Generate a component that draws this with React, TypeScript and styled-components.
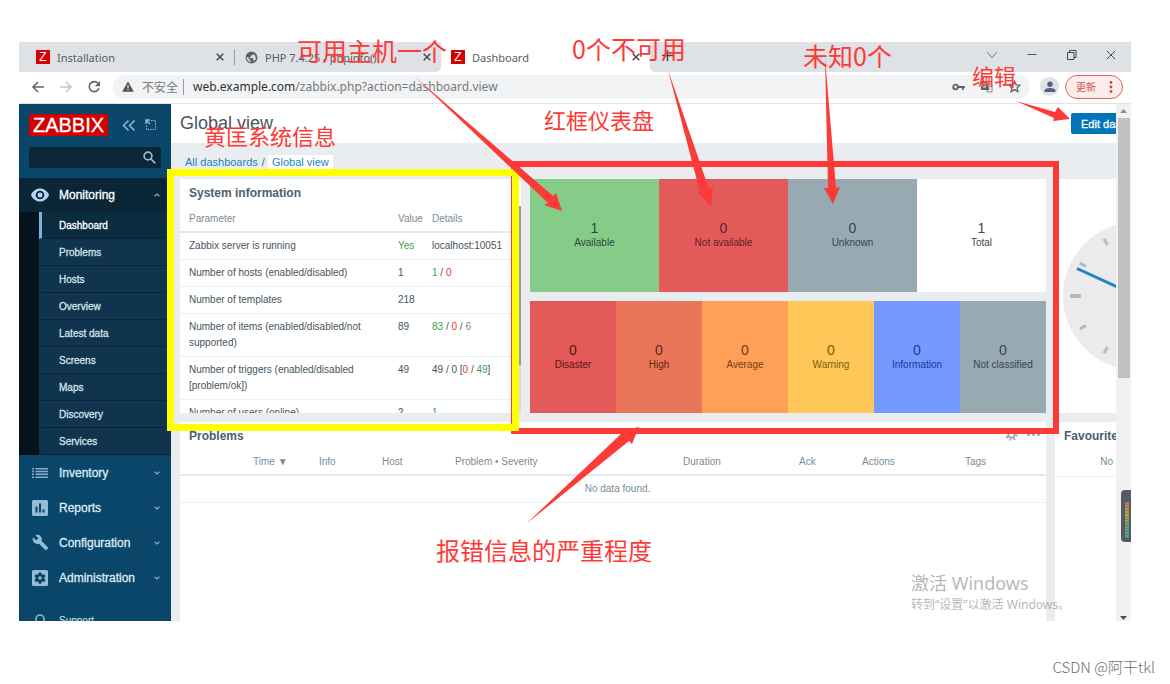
import React from "react";
import styled, { createGlobalStyle, css } from "styled-components";

const RED = "#fd3a37";

const GlobalStyle = createGlobalStyle`
  *, *::before, *::after { box-sizing: border-box; }
  body { margin: 0; background: #fff; overflow: hidden; }
  h1, h2, p, ul { margin: 0; padding: 0; }
  ul { list-style: none; }
  a { color: inherit; text-decoration: none; }
  button { border: 0; padding: 0; background: none; color: inherit; font: inherit; }
`;

const Page = styled.div`
  position: relative;
  display: flex;
  flex-direction: column;
  height: 100vh;
  overflow: hidden;
  font-family: "Liberation Sans", Arial, "Noto Sans CJK SC", sans-serif;
`;

const Frame = styled.div`
  flex: 1;
  min-height: 0;
  margin: 42px 39px 0 19px;
  display: flex;
  flex-direction: column;
  overflow: hidden;
`;

/* ---------- browser chrome ---------- */

const TabStrip = styled.div`
  display: flex;
  align-items: stretch;
  height: 30px;
  flex-shrink: 0;
  background: #dee1e6;
  color: #5a5d61;
  font: 11px "Noto Sans", "Noto Sans CJK SC", sans-serif;
`;

const TabItem = styled.div<{ $active?: boolean; $width: number }>`
  display: flex;
  align-items: center;
  gap: 7px;
  width: ${(p) => p.$width}px;
  padding: 0 10px 0 10px;
  white-space: nowrap;
  ${(p) =>
    p.$active &&
    css`
      background: #fff;
    `}
`;

const TabTitle = styled.span`
  flex: 1;
`;

const Divider = styled.span`
  width: 1px;
  height: 16px;
  align-self: center;
  background: #9a9da2;
`;

const Favicon = styled.span`
  width: 14px;
  height: 14px;
  background: #d40000;
  color: #fff;
  text-align: center;
  font: 12px/14px "Liberation Sans", Arial, sans-serif;
`;

const IconButton = styled.button`
  display: flex;
  align-items: center;
  justify-content: center;
`;

const StripEnd = styled.div`
  flex: 1;
  display: flex;
  justify-content: space-between;
  padding: 0 15px 4px 12px;
  border-bottom-left-radius: 5px;
  background: #dee1e6;
`;

const StripEndWrap = styled.div`
  flex: 1;
  display: flex;
  background: #fff;
`;

const LeftTabs = styled.div`
  display: flex;
  width: 422px;
  padding-left: 7px;
  border-bottom-right-radius: 5px;
  background: #dee1e6;
`;

const LeftTabsWrap = styled.div`
  display: flex;
  background: #fff;
`;

const WindowControls = styled.div`
  display: flex;
  gap: 28px;
`;

const Toolbar = styled.div`
  display: flex;
  align-items: center;
  height: 32px;
  flex-shrink: 0;
  padding: 0 8px 2px 12px;
  border-bottom: 1px solid #e3e3e3;
  background: #fff;
`;

const NavButtons = styled.div`
  display: flex;
  gap: 14px;
  width: 82px;
`;

const AddressBar = styled.div`
  flex: 1;
  display: flex;
  align-items: center;
  height: 24px;
  padding: 0 9px 0 9px;
  border-radius: 12px;
  background: #f1f3f4;
  color: #77797c;
  white-space: nowrap;
  font: 12px "Noto Sans", "Noto Sans CJK SC", sans-serif;
`;

const Insecure = styled.span`
  display: flex;
  align-items: center;
  gap: 8px;
  margin-right: 5px;
`;

const Url = styled.span`
  flex: 1;
  margin-left: 9px;
`;

const UrlHost = styled.span`
  color: #303134;
`;

const AddressIcons = styled.span`
  display: flex;
  align-items: center;
  gap: 15px;
`;

const Avatar = styled.span`
  display: flex;
  align-items: center;
  justify-content: center;
  width: 19px;
  height: 19px;
  margin: 0 6px 0 10px;
  border-radius: 50%;
  background: #dee1e6;
`;

const UpdateButton = styled.button`
  display: flex;
  align-items: center;
  justify-content: space-between;
  width: 58px;
  height: 24px;
  padding: 0 9px 0 10px;
  border: 1px solid #d9635f;
  border-radius: 12px;
  background: #fcecea;
  color: #d0544f;
  font: 10px "Noto Sans CJK SC", sans-serif;
`;

/* ---------- page body ---------- */

const Body = styled.div`
  flex: 1;
  min-height: 0;
  display: flex;
`;

const Sidebar = styled.aside`
  width: 152px;
  flex-shrink: 0;
  overflow: hidden;
  background: #0a466a;
  color: #d3e5f0;
`;

const SidebarTop = styled.div`
  display: flex;
  flex-direction: column;
  gap: 11px;
  height: 74px;
  padding: 10px 10px 0;
`;

const LogoRow = styled.div`
  display: flex;
  align-items: center;
  color: #8fb9d3;
`;

const Logo = styled.a`
  width: 79px;
  height: 22px;
  margin-right: 14px;
  background: #d40000;
  color: #fff;
  text-align: center;
  font-size: 20px;
  line-height: 22px;
  -webkit-text-stroke: 0.3px;
`;

const Collapse = styled(IconButton)`
  margin-right: 9px;
`;

const SearchBox = styled.label`
  display: flex;
  align-items: center;
  height: 21px;
  padding-right: 5px;
  border-radius: 2px;
  background: #0a2637;
  color: #9cbdd1;
`;

const SearchInput = styled.input`
  flex: 1;
  min-width: 0;
  height: 21px;
  border: 0;
  outline: 0;
  background: transparent;
  color: #fff;
  font: 10px "Liberation Sans", Arial, sans-serif;
`;

const MenuLink = styled.a<{ $open?: boolean; $small?: boolean }>`
  display: flex;
  align-items: center;
  height: ${(p) => (p.$open ? 34 : 35)}px;
  padding: 0 11px 0 12px;
  background: ${(p) => (p.$open ? "#0a2636" : "transparent")};
  color: ${(p) => (p.$open ? "#fff" : "#dcebf4")};
  font-size: ${(p) => (p.$small ? 10 : 12)}px;
  margin-top: ${(p) => (p.$small ? 8 : 0)}px;
  -webkit-text-stroke: ${(p) => (p.$small ? 0 : "0.3px")};
`;

const MenuIcon = styled.span`
  display: flex;
  align-items: center;
  justify-content: center;
  width: 18px;
  margin-right: 10px;
  color: #94bcd6;
`;

const MenuText = styled.span`
  flex: 1;
`;

const SubMenu = styled.ul`
  padding-left: 20px;
  background: #04131c;
`;

const SubLink = styled.a<{ $active?: boolean }>`
  display: flex;
  align-items: center;
  height: 27px;
  padding-left: 17px;
  border-left: 3px solid ${(p) => (p.$active ? "#78b7e2" : "#10344d")};
  border-bottom: 1px solid #092536;
  background: ${(p) => (p.$active ? "#0b2b3f" : "#10344d")};
  color: ${(p) => (p.$active ? "#fff" : "#d3e1ea")};
  font-size: 10px;
  -webkit-text-stroke: 0.3px;
`;

const Viewport = styled.main`
  flex: 1;
  min-width: 0;
  overflow: hidden;
  background: #e9edf0;
`;

/* The dashboard is wider than the window, so its right side is cut off. */
const Dashboard = styled.div`
  display: flex;
  flex-direction: column;
  width: calc(100% + 103px);
  height: 100%;
  color: #46545d;
  font-size: 10px;
`;

const Header = styled.header`
  display: flex;
  align-items: center;
  justify-content: space-between;
  height: 39px;
  flex-shrink: 0;
  padding-left: 9px;
  background: #fff;
`;

const Title = styled.h1`
  font-size: 18px;
  font-weight: 400;
  color: #4a555d;
`;

const HeaderActions = styled.div`
  width: 148px;
`;

const EditButton = styled.button`
  height: 21px;
  padding: 0 10px;
  border-radius: 2px;
  background: #0275b8;
  color: #fff;
  font-size: 11px;
  -webkit-text-stroke: 0.3px;
`;

const Breadcrumb = styled.nav`
  display: flex;
  align-items: center;
  height: 36px;
  flex-shrink: 0;
  padding: 2px 0 0 14px;
  color: #56646e;
  font-size: 11px;
`;

const Crumb = styled.a<{ $selected?: boolean }>`
  padding: 0 4px 0 ${(p) => (p.$selected ? 4 : 0)}px;
  background: ${(p) => (p.$selected ? "#fff" : "transparent")};
  color: #2384bd;
  line-height: 14px;
`;

const TopGrid = styled.div`
  display: grid;
  grid-template-columns: minmax(0, 341fr) minmax(0, 516fr) 164px;
  gap: 9px;
  height: 234px;
  flex-shrink: 0;
  margin-left: 9px;
`;

const BottomGrid = styled.div`
  flex: 1;
  display: grid;
  grid-template-columns: minmax(0, 1fr) 164px;
  gap: 9px;
  margin: 9px 0 0 9px;
`;

const Widget = styled.section`
  background: #fff;
  overflow: hidden;
`;

const WidgetTitle = styled.h2`
  font-size: 12px;
  line-height: 28px;
  padding: 0 9px;
  color: #4a6170;
`;

const WidgetHead = styled.div`
  display: flex;
  align-items: center;
  justify-content: space-between;
  color: #9aa8b2;
`;

const WidgetTools = styled.span`
  display: flex;
  align-items: center;
  gap: 9px;
  padding: 0 6px 4px 0;
`;

const InfoWidget = styled(Widget)`
  display: flex;
`;

const InfoMain = styled.div`
  flex: 1;
  overflow: hidden;
`;

const InfoScroll = styled.div`
  width: 2px;
  padding-top: 27px;
  background: linear-gradient(#fff 27px, #d9dde0 27px);
`;

const InfoThumb = styled.div`
  height: 159px;
  background: #969c9f;
`;

const Table = styled.table`
  width: 100%;
  table-layout: fixed;
  border-collapse: separate;
  border-spacing: 0;
`;

const Th = styled.th`
  height: 26px;
  padding: 0 0 1px 9px;
  border-bottom: 2px solid #e5e9ec;
  text-align: left;
  font-weight: 400;
  color: #7b8b97;
  white-space: nowrap;
`;

const Td = styled.td`
  padding: 5px 0 5px 9px;
  border-bottom: 1px solid #eef0f2;
  line-height: 16px;
  vertical-align: top;
  white-space: pre-wrap;
`;

const EmptyCell = styled(Td)`
  text-align: center;
  color: #768d99;
`;

const Mark = styled.span<{ $tone?: string }>`
  color: ${(p) =>
    p.$tone === "green" ? "#429e47" : p.$tone === "red" ? "#e33734" : p.$tone === "grey" ? "#768d99" : "inherit"};
`;

const Stats = styled.div`
  display: flex;
  flex-direction: column;
  gap: 9px;
`;

const StatRow = styled.div`
  flex: 1;
  display: flex;
`;

const Stat = styled.div<{ $bg: string; $color: string }>`
  flex: 1;
  min-width: 0;
  display: flex;
  flex-direction: column;
  align-items: center;
  justify-content: center;
  background: ${(p) => p.$bg};
  color: ${(p) => p.$color};
  line-height: 14px;
`;

const StatNumber = styled.span`
  font-size: 14px;
  line-height: 16px;
`;

const ClockWidget = styled(Widget)`
  display: flex;
  align-items: center;
  justify-content: center;
`;

const Favourites = styled.p`
  height: 27px;
  padding-bottom: 3px;
  border-bottom: 1px solid #eef0f2;
  text-align: center;
  line-height: 24px;
  color: #768d99;
`;

const Scrollbar = styled.div`
  display: flex;
  flex-direction: column;
  align-items: center;
  width: 15px;
  flex-shrink: 0;
  padding: 5px 0 1px;
  background: #f1f1f1;
`;

const Thumb = styled.div`
  width: 12px;
  height: 260px;
  margin: 5px 0 auto;
  background: #c1c1c1;
`;

const Footer = styled.footer`
  display: flex;
  align-items: flex-end;
  justify-content: flex-end;
  height: 63px;
  flex-shrink: 0;
  padding: 0 15px 7px 0;
  color: #6f6f6f;
  font: 15px/20px "Noto Sans CJK SC", sans-serif;
  font-weight: 300;
`;

/* ---------- marks lying over the page ---------- */

const Overlay = styled.div`
  position: absolute;
  inset: 0;
  pointer-events: none;
`;

const Box = styled.div<{ $x: number; $y: number; $w: number; $h: number; $color: string }>`
  position: absolute;
  left: ${(p) => p.$x}px;
  top: ${(p) => p.$y}px;
  width: ${(p) => p.$w}px;
  height: ${(p) => p.$h}px;
  border: ${(p) => (p.$color === RED ? 6 : 7)}px solid ${(p) => p.$color};
`;

const Arrows = styled.svg`
  position: absolute;
  left: 0;
  top: 0;
`;

const Note = styled.span<{ $x: number; $y: number; $size: number }>`
  position: absolute;
  left: ${(p) => p.$x}px;
  top: ${(p) => p.$y}px;
  color: ${RED};
  font: ${(p) => p.$size}px/30px "Noto Sans CJK SC", sans-serif;
  white-space: nowrap;
`;

const Activation = styled.div`
  position: absolute;
  left: 911px;
  top: 571px;
  color: rgba(110, 110, 110, 0.5);
  white-space: nowrap;
  font: 12px/17px "Noto Sans", "Noto Sans CJK SC", sans-serif;
`;

const ActivationTitle = styled.p`
  font-size: 18px;
  line-height: 25px;
`;

const Meter = styled.div`
  position: absolute;
  right: 39px;
  top: 490px;
  width: 10px;
  height: 52px;
  padding: 12px 2px 4px 4px;
  border-radius: 4px 0 0 4px;
  background: #565a66;
`;

const MeterBar = styled.div`
  height: 36px;
  background: repeating-linear-gradient(transparent 0 2px, rgba(86, 90, 102, 0.4) 2px 3px),
    linear-gradient(#c9734c, #b9a545 35%, #6fa758 60%, #45a394);
`;

/* ---------- drawings ---------- */

const Cross = ({ size = 8, width = 1.5 }: { size?: number; width?: number }) => (
  <svg width={size} height={size} viewBox="0 0 8 8" stroke="#45484c" strokeWidth={width} fill="none">
    <path d="M.7.7 7.3 7.3M7.3.7.7 7.3" />
  </svg>
);

const Chevron = ({ up }: { up?: boolean }) => (
  <svg width="6" height="4" viewBox="0 0 6 4" fill="none" stroke="#86adc6" strokeWidth="1.2">
    <path d={up ? "M.6 3.2 3 1l2.4 2.2" : "M.6.8 3 3 5.4.8"} />
  </svg>
);

const Globe = () => (
  <svg width="13" height="13" viewBox="0 0 24 24">
    <path
      fill="#5f6368"
      d="M12 1a11 11 0 1 0 0 22 11 11 0 0 0 0-22zm-1 19.900A9 9 0 0 1 3.200 10.200L8.500 15.500v1c0 1.100.9 2 2 2zm7.200-2.700A2 2 0 0 0 16.300 17h-1v-3c0-.6-.5-1-1-1h-6v-2h2c.6 0 1-.5 1-1V8h2a2 2 0 0 0 2-2v-.4a9 9 0 0 1 2.900 12.600z"
    />
  </svg>
);

const Clock = () => (
  <svg width="148" height="148" viewBox="-74 -74 148 148">
    <circle r="74" fill="#ebebeb" />
    {Array.from({ length: 12 }, (_, i) => (
      <path
        key={i}
        d={i % 3 === 0 ? "M0-67V-56" : "M0-66V-59"}
        stroke="#aebcc4"
        strokeWidth={i % 3 === 0 ? 4 : 3}
        transform={`rotate(${i * 30})`}
      />
    ))}
    <path d="M-60-27.500 0 0" stroke="#1a86c3" strokeWidth="3" />
  </svg>
);

const icons: Record<string, React.ReactNode> = {
  eye: (
    <svg width="18" height="14" viewBox="0 0 18 14">
      <path fill="#b3d6ee" d="M9 .5C5 .5 1.600 3 0 7c1.600 4 5 6.500 9 6.500S16.400 11 18 7C16.400 3 13 .5 9 .5z" />
      <circle cx="9" cy="7" r="4.300" fill="#0a2636" />
      <circle cx="9" cy="7" r="2.500" fill="#b3d6ee" />
    </svg>
  ),
  list: (
    <svg width="16" height="10" viewBox="0 0 16 10" fill="#86aecb">
      {[0, 2.800, 5.600, 8.400].map((y) => (
        <path key={y} d={`M0 ${y}h2v1.500h-2zM3.500 ${y}h12.500v1.500h-12.500z`} />
      ))}
    </svg>
  ),
  chart: (
    <svg width="16" height="16" viewBox="0 0 16 16">
      <rect width="16" height="16" rx="1.500" fill="#94bcd6" />
      <path d="M3.500 6.500h2v6h-2zM7 3.500h2v9H7zM10.500 9.500h2v3h-2z" fill="#0a466a" />
    </svg>
  ),
  wrench: (
    <svg width="17" height="17" viewBox="0 0 24 24" fill="#94bcd6">
      <path d="M22.700 19l-9.100-9.100c.9-2.300.4-5-1.500-6.900-2-2-5-2.400-7.400-1.300L9 6 6 9 1.600 4.700C.4 7.100.9 10.100 2.900 12.100c1.900 1.900 4.600 2.400 6.900 1.500l9.100 9.100c.4.4 1 .4 1.400 0l2.300-2.300c.5-.4.5-1.100.1-1.400z" />
    </svg>
  ),
  gear: (
    <svg width="16" height="16" viewBox="0 0 16 16">
      <rect width="16" height="16" rx="1.500" fill="#94bcd6" />
      <path
        d="M6.800 2.500h2.400l.4 1.600 1.200.7 1.600-.5 1.200 2.100-1.200 1.100v1.200l1.200 1.100-1.200 2.100-1.600-.5-1.200.7-.4 1.600H6.800l-.4-1.600-1.200-.7-1.600.5-1.200-2.100 1.200-1.100V7.500L2.400 6.400l1.200-2.100 1.600.5 1.200-.7z"
        fill="#0a466a"
      />
      <circle cx="8" cy="8" r="1.700" fill="#94bcd6" />
    </svg>
  ),
  support: (
    <svg width="12" height="14" viewBox="0 0 12 14" fill="none" stroke="#94bcd6" strokeWidth="1.500">
      <path d="M2 8V5a4 4 0 0 1 8 0v3M2 7v3M10 7v3c0 2-1 3-3 3" />
    </svg>
  ),
};

/* ---------- data ---------- */

const submenu = ["Dashboard", "Problems", "Hosts", "Overview", "Latest data", "Screens", "Maps", "Discovery", "Services"];

const sections = [
  { icon: "list", label: "Inventory" },
  { icon: "chart", label: "Reports" },
  { icon: "wrench", label: "Configuration" },
  { icon: "gear", label: "Administration" },
];

type Piece = [string, string?];
const info: { name: string; value: Piece; details: Piece[] }[] = [
  { name: "Zabbix server is running", value: ["Yes", "green"], details: [["localhost:10051"]] },
  { name: "Number of hosts (enabled/disabled)", value: ["1"], details: [["1", "green"], [" / "], ["0", "red"]] },
  { name: "Number of templates", value: ["218"], details: [] },
  {
    name: "Number of items (enabled/disabled/not supported)",
    value: ["89"],
    details: [["83", "green"], [" / "], ["0", "red"], [" / "], ["6", "grey"]],
  },
  {
    name: "Number of triggers (enabled/disabled [problem/ok])",
    value: ["49"],
    details: [["49 / 0 ["], ["0", "red"], [" / "], ["49", "green"], ["]"]],
  },
  { name: "Number of users (online)", value: ["2"], details: [["1", "green"]] },
];

const hosts = [
  { n: 1, label: "Available", bg: "#86cc89", color: "#2b4a34" },
  { n: 0, label: "Not available", bg: "#e45959", color: "#5c2430" },
  { n: 0, label: "Unknown", bg: "#97a9b1", color: "#38464e" },
  { n: 1, label: "Total", bg: "#ffffff", color: "#3c4b54" },
];

const severities = [
  { n: 0, label: "Disaster", bg: "#e45959", color: "#5c1414" },
  { n: 0, label: "High", bg: "#e97659", color: "#662211" },
  { n: 0, label: "Average", bg: "#ffa059", color: "#7a3c0c" },
  { n: 0, label: "Warning", bg: "#ffc859", color: "#7d5a10" },
  { n: 0, label: "Information", bg: "#7499ff", color: "#173a9c" },
  { n: 0, label: "Not classified", bg: "#97a9b1", color: "#38464e" },
];

const problemColumns: [string, number | undefined][] = [
  ["", 64],
  ["Time", 66],
  ["Info", 63],
  ["Host", 73],
  ["Problem • Severity", 228],
  ["Duration", 116],
  ["Ack", 63],
  ["Actions", 103],
  ["Tags", undefined],
];

const notes = [
  { text: "可用主机一个", x: 297, y: 35, size: 25 },
  { text: "0个不可用", x: 572, y: 33, size: 25 },
  { text: "未知0个", x: 803, y: 40, size: 25 },
  { text: "编辑", x: 972, y: 60, size: 22 },
  { text: "红框仪表盘", x: 544, y: 104, size: 22 },
  { text: "黄匡系统信息", x: 204, y: 120, size: 22 },
  { text: "报错信息的严重程度", x: 436, y: 535, size: 24 },
];

const arrows = [
  "415,77 553,196 556,193 562,211 544,205 548,203",
  "668,70 709,189 713,188 711,207 698,192 700,192",
  "825,58 836,188 840,187 833,204 824,188 828,188",
  "1016,101 1055,112 1058,107 1070,119 1053,121 1054,118",
  "526,524 622,433 620,431 639,427 632,444 629,441",
];

/* ---------- parts ---------- */

const StatGroup = ({ items }: { items: typeof hosts }) => (
  <StatRow>
    {items.map((s) => (
      <Stat key={s.label} $bg={s.bg} $color={s.color}>
        <StatNumber>{s.n}</StatNumber>
        {s.label}
      </Stat>
    ))}
  </StatRow>
);

const Browser = () => (
  <>
    <TabStrip>
      <LeftTabsWrap>
        <LeftTabs>
          <TabItem $width={208}>
            <Favicon>Z</Favicon>
            <TabTitle>Installation</TabTitle>
            <IconButton aria-label="Close tab"><Cross /></IconButton>
          </TabItem>
          <Divider />
          <TabItem $width={206}>
            <Globe />
            <TabTitle>PHP 7.4.25 - phpinfo()</TabTitle>
            <IconButton aria-label="Close tab"><Cross /></IconButton>
          </TabItem>
        </LeftTabs>
      </LeftTabsWrap>
      <TabItem $active $width={209}>
        <Favicon>Z</Favicon>
        <TabTitle>Dashboard</TabTitle>
        <IconButton aria-label="Close tab"><Cross /></IconButton>
      </TabItem>
      <StripEndWrap>
        <StripEnd>
          <IconButton aria-label="New tab">
            <svg width="11" height="11" viewBox="0 0 11 11" stroke="#45484c" strokeWidth="1.500">
              <path d="M5.500 0v11M0 5.500h11" />
            </svg>
          </IconButton>
          <WindowControls>
            <IconButton aria-label="Tab search">
              <svg width="12" height="10" viewBox="0 0 12 10" fill="none" stroke="#777" strokeWidth="1">
                <path d="M1.500 2.500 6 7.500l4.500-5" />
              </svg>
            </IconButton>
            <IconButton aria-label="Minimize">
              <svg width="12" height="10" viewBox="0 0 12 10" stroke="#555"><path d="M1.500 4.500h9" /></svg>
            </IconButton>
            <IconButton aria-label="Restore">
              <svg width="12" height="10" viewBox="0 0 12 10" fill="none" stroke="#444">
                <path d="M1.500 2.500h6.500v7H1.500zM3.500 2.500V.5h6.500v7H8" />
              </svg>
            </IconButton>
            <IconButton aria-label="Close"><Cross size={10} width={0.8} /></IconButton>
          </WindowControls>
        </StripEnd>
      </StripEndWrap>
    </TabStrip>
    <Toolbar>
      <NavButtons>
        <IconButton aria-label="Back">
          <svg width="14" height="14" viewBox="0 0 14 14" fill="none" stroke="#5f6368" strokeWidth="1.500">
            <path d="M13 7H2M7 2 2 7l5 5" />
          </svg>
        </IconButton>
        <IconButton aria-label="Forward">
          <svg width="14" height="14" viewBox="0 0 14 14" fill="none" stroke="#c3c5c8" strokeWidth="1.500">
            <path d="M1 7h11M7 2l5 5-5 5" />
          </svg>
        </IconButton>
        <IconButton aria-label="Reload">
          <svg width="14" height="14" viewBox="0 0 14 14">
            <path d="M11 3.300A5 5 0 1 0 12 8.300" fill="none" stroke="#5f6368" strokeWidth="1.600" />
            <path d="M13 1v5.300H7.700z" fill="#5f6368" />
          </svg>
        </IconButton>
      </NavButtons>
      <AddressBar>
        <Insecure>
          <svg width="12" height="11" viewBox="0 0 12 11">
            <path d="M6 .5 11.800 10.700H.2z" fill="#4d5054" />
            <path d="M5.400 4h1.200v3.200H5.400zM5.400 8h1.200v1.300H5.400z" fill="#f1f3f4" />
          </svg>
          不安全
        </Insecure>
        <Divider />
        <Url>
          <UrlHost>web.example.com</UrlHost>/zabbix.php?action=dashboard.view
        </Url>
        <AddressIcons>
          <svg width="13" height="8" viewBox="0 0 13 8" fill="none" stroke="#5f6368" strokeWidth="1.800">
            <circle cx="3.500" cy="4" r="2.300" />
            <path d="M6 4h6.800M10.800 4v3" />
          </svg>
          <svg width="13" height="13" viewBox="0 0 13 13">
            <path d="M6 4h6v8H7z" fill="#f1f3f4" stroke="#85888c" />
            <path d="M1 1h6l2.500 9H1z" fill="#5f6368" />
            <path d="M5.900 4.400A2 2 0 1 0 6 6H4.300" fill="none" stroke="#f1f3f4" />
          </svg>
          <svg width="13" height="13" viewBox="0 0 13 13" fill="none" stroke="#5f6368" strokeWidth="1.300">
            <path d="m6.500 1.300 1.600 3.500 3.800.4-2.800 2.600.8 3.800-3.400-2-3.400 2 .8-3.800L1.100 5.200l3.800-.4z" />
          </svg>
        </AddressIcons>
      </AddressBar>
      <Avatar>
        <svg width="12" height="12" viewBox="0 0 12 12" fill="#56607c">
          <circle cx="6" cy="3.200" r="2.700" />
          <path d="M.6 11V9.300C.6 7.600 4 6.900 6 6.900s5.400.7 5.400 2.400V11z" />
        </svg>
      </Avatar>
      <UpdateButton>
        更新
        <svg width="4" height="12" viewBox="0 0 4 12" fill="#d0443e">
          <circle cx="2" cy="1.500" r="1.400" /><circle cx="2" cy="6" r="1.400" /><circle cx="2" cy="10.500" r="1.400" />
        </svg>
      </UpdateButton>
    </Toolbar>
  </>
);

const SideNav = () => (
  <Sidebar>
    <SidebarTop>
      <LogoRow>
        <Logo href="#">ZABBIX</Logo>
        <Collapse aria-label="Collapse sidebar">
          <svg width="14" height="11" viewBox="0 0 14 11" fill="none" stroke="currentColor" strokeWidth="1.500">
            <path d="M6.500.5 1.500 5.500l5 5M12.500.5l-5 5 5 5" />
          </svg>
        </Collapse>
        <IconButton aria-label="Hide sidebar">
          <svg width="12" height="12" viewBox="0 0 12 12" fill="none" stroke="currentColor">
            <path d="M1 5V1h4M1.500 1.500 5 5" strokeWidth="1.500" />
            <path d="M6 1.500h4.500v9h-9V6" strokeDasharray="1.500 1" />
          </svg>
        </IconButton>
      </LogoRow>
      <SearchBox>
        <SearchInput aria-label="Search" />
        <svg width="13" height="13" viewBox="0 0 13 13" fill="none" stroke="currentColor" strokeWidth="1.700">
          <circle cx="5" cy="5" r="3.900" />
          <path d="m8 8 4.300 4.300" />
        </svg>
      </SearchBox>
    </SidebarTop>
    <nav>
      <MenuLink href="#" $open>
        <MenuIcon>{icons.eye}</MenuIcon>
        <MenuText>Monitoring</MenuText>
        <Chevron up />
      </MenuLink>
      <SubMenu>
        {submenu.map((item, i) => (
          <li key={item}><SubLink href="#" $active={i === 0}>{item}</SubLink></li>
        ))}
      </SubMenu>
      {sections.map((s) => (
        <MenuLink href="#" key={s.label}>
          <MenuIcon>{icons[s.icon]}</MenuIcon>
          <MenuText>{s.label}</MenuText>
          <Chevron />
        </MenuLink>
      ))}
      <MenuLink href="#" $small>
        <MenuIcon>{icons.support}</MenuIcon>
        <MenuText>Support</MenuText>
      </MenuLink>
    </nav>
  </Sidebar>
);

export default function App() {
  return (
    <Page>
      <GlobalStyle />
      <Frame>
        <Browser />
        <Body>
          <SideNav />
          <Viewport>
            <Dashboard>
              <Header>
                <Title>Global view</Title>
                <HeaderActions><EditButton>Edit dashboard</EditButton></HeaderActions>
              </Header>
              <Breadcrumb>
                <Crumb href="#">All dashboards</Crumb>/&nbsp;<Crumb href="#" $selected>Global view</Crumb>
              </Breadcrumb>
              <TopGrid>
                <InfoWidget>
                  <InfoMain>
                    <WidgetTitle>System information</WidgetTitle>
                    <Table>
                      <colgroup><col /><col width="34" /><col width="96" /></colgroup>
                      <thead>
                        <tr><Th>Parameter</Th><Th>Value</Th><Th>Details</Th></tr>
                      </thead>
                      <tbody>
                        {info.map((row) => (
                          <tr key={row.name}>
                            <Td>{row.name}</Td>
                            <Td><Mark $tone={row.value[1]}>{row.value[0]}</Mark></Td>
                            <Td>
                              {row.details.map(([text, tone], i) => (
                                <Mark key={i} $tone={tone}>{text}</Mark>
                              ))}
                            </Td>
                          </tr>
                        ))}
                      </tbody>
                    </Table>
                  </InfoMain>
                  <InfoScroll><InfoThumb /></InfoScroll>
                </InfoWidget>
                <Stats>
                  <StatGroup items={hosts} />
                  <StatGroup items={severities} />
                </Stats>
                <ClockWidget><Clock /></ClockWidget>
              </TopGrid>
              <BottomGrid>
                <Widget>
                  <WidgetHead>
                    <WidgetTitle>Problems</WidgetTitle>
                    <WidgetTools>
                      <svg width="13" height="13" viewBox="0 0 13 13" fill="none" stroke="currentColor">
                        <circle cx="6.500" cy="6.500" r="3.300" strokeWidth="2" />
                        <circle cx="6.500" cy="6.500" r="5.300" strokeWidth="2" strokeDasharray="2 2.160" />
                      </svg>
                      <svg width="13" height="3" viewBox="0 0 13 3" fill="currentColor">
                        <circle cx="1.500" cy="1.500" r="1.500" /><circle cx="6.500" cy="1.500" r="1.500" />
                        <circle cx="11.500" cy="1.500" r="1.500" />
                      </svg>
                    </WidgetTools>
                  </WidgetHead>
                  <Table>
                    <colgroup>{problemColumns.map(([name, w]) => <col key={name} width={w} />)}</colgroup>
                    <thead>
                      <tr>
                        {problemColumns.map(([name]) => (
                          <Th key={name}>{name}{name === "Time" && " ▼"}</Th>
                        ))}
                      </tr>
                    </thead>
                    <tbody>
                      <tr><EmptyCell colSpan={9}>No data found.</EmptyCell></tr>
                    </tbody>
                  </Table>
                </Widget>
                <Widget>
                  <WidgetTitle>Favourite maps</WidgetTitle>
                  <Favourites>No maps added.</Favourites>
                </Widget>
              </BottomGrid>
            </Dashboard>
          </Viewport>
          <Scrollbar>
            <svg width="7" height="4" viewBox="0 0 7 4"><path d="M0 4 3.500 0 7 4z" fill="#8f8f8f" /></svg>
            <Thumb />
            <svg width="7" height="4" viewBox="0 0 7 4"><path d="M0 0h7L3.500 4z" fill="#505050" /></svg>
          </Scrollbar>
        </Body>
      </Frame>
      <Footer>CSDN @阿干tkl</Footer>
      <Overlay>
        <Activation>
          <ActivationTitle>激活 Windows</ActivationTitle>
          <p>转到“设置”以激活 Windows。</p>
        </Activation>
        <Meter><MeterBar /></Meter>
        <Box $x={511} $y={161} $w={548} $h={273} $color={RED} />
        <Box $x={167} $y={169} $w={352} $h={262} $color="#ffff00" />
        <Arrows width="1170" height="684" viewBox="0 0 1170 684" fill={RED}>
          {arrows.map((points) => <polygon key={points} points={points} />)}
        </Arrows>
        {notes.map((n) => (
          <Note key={n.text} $x={n.x} $y={n.y} $size={n.size}>{n.text}</Note>
        ))}
      </Overlay>
    </Page>
  );
}
